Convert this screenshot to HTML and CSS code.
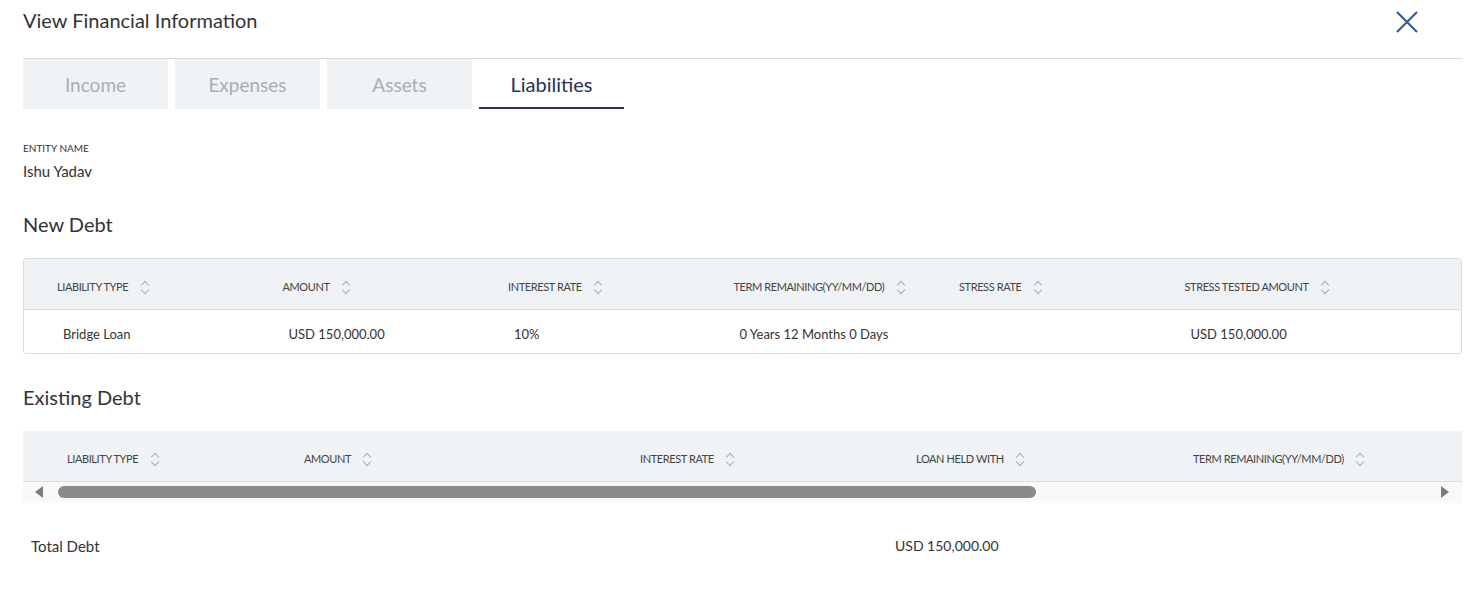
FILE: index.html
```html
<!DOCTYPE html>
<html>
<head>
    <meta charset="UTF-8">
    <title>View Financial Information</title>
    <link rel="stylesheet" href="styles.css">
</head>
<body>
    <div class="modal">
        <div class="modal-header">
            <h1>View Financial Information</h1>
            <button class="close" aria-label="Close">
                <svg width="22" height="22" viewBox="0 0 22 22"><path d="M1 1 L21 21 M21 1 L1 21" stroke="#2a5b8c" stroke-width="2" fill="none"/></svg>
            </button>
        </div>

        <div class="tabs">
            <div class="tab">Income</div>
            <div class="tab">Expenses</div>
            <div class="tab">Assets</div>
            <div class="tab active">Liabilities</div>
        </div>

        <div class="field">
            <div class="field-label">Entity Name</div>
            <div class="field-value">Ishu Yadav</div>
        </div>

        <h2>New Debt</h2>
        <div class="table-box">
            <table class="debt new-debt">
                <thead>
                    <tr>
                        <th>Liability Type <span class="sort"></span></th>
                        <th>Amount <span class="sort"></span></th>
                        <th>Interest Rate <span class="sort"></span></th>
                        <th>Term Remaining(YY/MM/DD) <span class="sort"></span></th>
                        <th>Stress Rate <span class="sort"></span></th>
                        <th>Stress Tested Amount <span class="sort"></span></th>
                        <th></th>
                    </tr>
                </thead>
                <tbody>
                    <tr>
                        <td>Bridge Loan</td>
                        <td>USD 150,000.00</td>
                        <td>10%</td>
                        <td>0 Years 12 Months 0 Days</td>
                        <td></td>
                        <td>USD 150,000.00</td>
                        <td></td>
                    </tr>
                </tbody>
            </table>
        </div>

        <h2 class="existing-title">Existing Debt</h2>
        <div class="scroll-box">
            <table class="debt existing-debt">
                <thead>
                    <tr>
                        <th>Liability Type <span class="sort"></span></th>
                        <th>Amount <span class="sort"></span></th>
                        <th>Interest Rate <span class="sort"></span></th>
                        <th>Loan Held With <span class="sort"></span></th>
                        <th>Term Remaining(YY/MM/DD) <span class="sort"></span></th>
                    </tr>
                </thead>
            </table>
            <div class="scrollbar">
                <span class="arrow left"></span>
                <div class="track"><div class="thumb"></div></div>
                <span class="arrow right"></span>
            </div>
        </div>

        <div class="total">
            <span class="total-label">Total Debt</span>
            <span class="total-value">USD 150,000.00</span>
        </div>
    </div>
</body>
</html>
```

FILE: styles.css
```css
* {
    box-sizing: border-box;
}

body {
    margin: 0;
    background: #fff;
    font-family: Lato, 'Open Sans', sans-serif;
    color: #333;
}

.modal {
    padding: 0 7px 0 23px;
}

.modal-header {
    display: flex;
    justify-content: space-between;
    align-items: flex-start;
    height: 59px;
    border-bottom: 1px solid #d9d9d9;
}

h1 {
    margin: 8px 0 0 0;
    font-size: 20px;
    line-height: 24px;
    font-weight: 400;
    color: #333;
}

.close {
    margin: 11px 44px 0 0;
    padding: 0;
    border: none;
    background: none;
    width: 22px;
    height: 22px;
}

/* вкладки */
.tabs {
    display: flex;
    gap: 7px;
}

.tab {
    width: 145px;
    height: 50px;
    display: flex;
    align-items: center;
    justify-content: center;
    background: #f0f3f6;
    color: #a9adb4;
    font-size: 19px;
}

.tab.active {
    background: #fff;
    color: #2c2f57;
    font-size: 20px;
    border-bottom: 2px solid #2b2f6e;
    padding-top: 2px;
}

.field {
    margin-top: 32px;
}

.field-label {
    font-size: 10px;
    line-height: 14px;
    text-transform: uppercase;
    color: #333;
}

.field-value {
    margin-top: 7px;
    font-size: 15px;
    line-height: 18px;
}

h2 {
    margin: 32px 0 22px 0;
    font-size: 20px;
    line-height: 24px;
    font-weight: 400;
}

/* таблицы */
.table-box {
    border: 1px solid #dcdcdc;
    border-radius: 3px;
    overflow: hidden;
}

table.debt {
    border-collapse: collapse;
    width: 100%;
    table-layout: fixed;
}

.debt th {
    height: 50px;
    background: #f0f3f6;
    border-bottom: 1px solid #dcdcdc;
    text-align: left;
    font-size: 11px;
    font-weight: 400;
    text-transform: uppercase;
    color: #444;
    letter-spacing: -0.4px;
    white-space: nowrap;
    padding: 7px 0 0 33px;
}

.debt td {
    height: 44px;
    font-size: 13px;
    padding: 5px 0 0 39px;
    color: #333;
}

.new-debt th:nth-child(-n+6) {
    width: 225.5px;
}

.existing-debt th {
    padding-left: 44px;
}

.existing-debt th:nth-child(1) { width: 237px; }
.existing-debt th:nth-child(2) { width: 336px; }
.existing-debt th:nth-child(3) { width: 276px; }
.existing-debt th:nth-child(4) { width: 277px; }

.sort {
    display: inline-block;
    vertical-align: middle;
    width: 9px;
    height: 14px;
    margin-left: 10px;
    margin-top: -3px;
    position: relative;
}

.sort::before,
.sort::after {
    content: "";
    position: absolute;
    left: 1px;
    width: 5px;
    height: 5px;
    border-color: #9db0c6;
    border-style: solid;
    border-width: 0;
    transform: rotate(45deg);
}

.sort::before {
    top: 2px;
    border-top-width: 1px;
    border-left-width: 1px;
}

.sort::after {
    bottom: 1px;
    border-bottom-width: 1px;
    border-right-width: 1px;
}

.existing-title {
    margin: 31px 0 22px 0;
}

.scroll-box {
    background: #f9f9f9;
}

.scrollbar {
    display: flex;
    align-items: center;
    height: 21px;
    padding: 0 13px 0 12px;
}

.arrow {
    width: 0;
    height: 0;
    border-top: 6px solid transparent;
    border-bottom: 6px solid transparent;
}

.arrow.left {
    border-right: 8px solid #7c7c7c;
}

.arrow.right {
    border-left: 8px solid #7c7c7c;
}

.track {
    flex: 1;
    padding: 0 14px 0 15px;
}

.thumb {
    width: 978px;
    height: 12px;
    border-radius: 6px;
    background: #8a8a8a;
}

.total {
    display: flex;
    margin-top: 34px;
    padding-left: 8px;
    font-size: 14px;
    line-height: 18px;
}

.total-label {
    width: 864px;
    font-size: 15px;
}
```
